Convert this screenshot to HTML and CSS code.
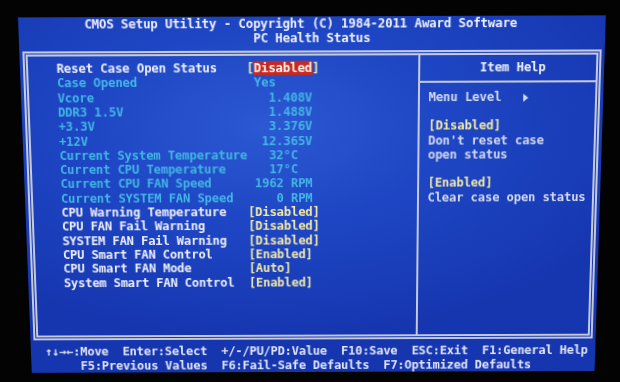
FILE: index.html
```html
<!DOCTYPE html>
<html lang="en">
<head>
<meta charset="utf-8">
<title>CMOS Setup Utility - PC Health Status</title>
<link rel="stylesheet" href="styles.css">
</head>
<body>
<div class="screen">
  <div class="title title-main">CMOS Setup Utility - Copyright (C) 1984-2011 Award Software</div>
  <div class="title title-sub">PC Health Status</div>

  <div class="frame"></div>
  <div class="divider"></div>
  <div class="help-sep"></div>

  <div class="settings">
    <div class="row"><span class="lbl w">Reset Case Open Status</span><span class="val"><span class="y">[</span><span class="sel">Disabled</span><span class="y">]</span></span></div>
    <div class="row c"><span class="lbl">Case Opened</span><span class="val"> Yes</span></div>
    <div class="row c"><span class="lbl">Vcore</span><span class="val">   1.408V</span></div>
    <div class="row c"><span class="lbl">DDR3 1.5V</span><span class="val">   1.488V</span></div>
    <div class="row c"><span class="lbl">+3.3V</span><span class="val">   3.376V</span></div>
    <div class="row c"><span class="lbl">+12V</span><span class="val">  12.365V</span></div>
    <div class="row c"><span class="lbl">Current System Temperature</span><span class="val">   32°C</span></div>
    <div class="row c"><span class="lbl">Current CPU Temperature</span><span class="val">   17°C</span></div>
    <div class="row c"><span class="lbl">Current CPU FAN Speed</span><span class="val"> 1962 RPM</span></div>
    <div class="row c"><span class="lbl">Current SYSTEM FAN Speed</span><span class="val">    0 RPM</span></div>
    <div class="row"><span class="lbl w">CPU Warning Temperature</span><span class="val y">[Disabled]</span></div>
    <div class="row"><span class="lbl w">CPU FAN Fail Warning</span><span class="val y">[Disabled]</span></div>
    <div class="row"><span class="lbl w">SYSTEM FAN Fail Warning</span><span class="val y">[Disabled]</span></div>
    <div class="row"><span class="lbl w">CPU Smart FAN Control</span><span class="val y">[Enabled]</span></div>
    <div class="row"><span class="lbl w">CPU Smart FAN Mode</span><span class="val y">[Auto]</span></div>
    <div class="row"><span class="lbl w">System Smart FAN Control</span><span class="val y">[Enabled]</span></div>
  </div>

  <div class="help-title">Item Help</div>
  <div class="help">
    <div class="hl">Menu Level   <span class="arrow"></span></div>
    <div class="hl"> </div>
    <div class="hl y">[Disabled]</div>
    <div class="hl">Don't reset case</div>
    <div class="hl">open status</div>
    <div class="hl"> </div>
    <div class="hl y">[Enabled]</div>
    <div class="hl">Clear case open status</div>
  </div>

  <div class="foot foot-1">↑↓→←:Move  Enter:Select  +/-/PU/PD:Value  F10:Save  ESC:Exit  F1:General Help</div>
  <div class="foot foot-2">F5:Previous Values  F6:Fail-Safe Defaults  F7:Optimized Defaults</div>
</div>
</body>
</html>
```

FILE: styles.css
```css
:root {
  --cw: 7.19px;
  --rh: 14.32px;
  --line: #c4cadc;
  --white: #eef0fa;
  --cyan: #42b6e4;
  --yellow: #f2eaa6;
}

html, body {
  margin: 0;
  padding: 0;
  background: #030304;
  overflow: hidden;
}

body {
  padding-top: 19px;
  padding-left: 25px;
  height: 382px;
  box-sizing: border-box;
}

.screen {
  width: calc(80 * var(--cw));
  height: calc(25 * var(--rh));
  display: grid;
  grid-template-columns: repeat(80, var(--cw));
  grid-template-rows: repeat(25, var(--rh));
  background: radial-gradient(ellipse 70% 60% at 42% 30%, #2c58d2 0%, #1e46c4 45%, #1636b0 100%);
  font-family: "DejaVu Sans Mono", "Liberation Mono", monospace;
  font-weight: bold;
  font-size: 12.2px;
  letter-spacing: -0.154px;
  line-height: var(--rh);
  white-space: pre;
  color: var(--white);
  transform: perspective(1000px) rotateX(-7deg) rotate(-0.2deg);
  filter: blur(0.3px);
}

.title-main { grid-row: 1; grid-column: 10 / span 59; }
.title-sub { grid-row: 2; grid-column: 33 / span 16; }

.frame {
  grid-row: 3 / 24;
  grid-column: 1 / 81;
  margin: 4px 3px 5px 3px;
  border: 5px double var(--line);
}

.divider {
  grid-row: 3 / 24;
  grid-column: 55;
  margin: 8px 0 8px 4px;
  border-left: 2px solid var(--line);
}

.help-sep {
  grid-row: 5;
  grid-column: 55 / 81;
  margin: 6px 8px 0 5px;
  border-top: 2px solid var(--line);
  height: 0;
}

.settings {
  grid-row: 4 / span 16;
  grid-column: 6 / span 48;
  display: grid;
  grid-auto-rows: var(--rh);
}

.row {
  display: grid;
  grid-template-columns: calc(26 * var(--cw)) auto;
}

.c { color: var(--cyan); }
.w { color: var(--white); }
.y { color: var(--yellow); }

.sel {
  background: #c42a22;
  color: #fff2ee;
}

.help-title {
  grid-row: 4;
  grid-column: 64 / span 9;
}

.help {
  grid-row: 6 / span 8;
  grid-column: 57 / span 23;
  display: grid;
  grid-auto-rows: var(--rh);
  color: #d4d9ee;
}

.help .y { color: var(--yellow); }

.arrow {
  display: inline-block;
  width: 0;
  height: 0;
  border-left: 5px solid #d4d9ee;
  border-top: 4px solid transparent;
  border-bottom: 4px solid transparent;
  vertical-align: -1px;
}

.foot { color: #e2e6f6; }
.foot-1 { grid-row: 24; grid-column: 3 / span 77; }
.foot-2 { grid-row: 25; grid-column: 8 / span 64; }
```
